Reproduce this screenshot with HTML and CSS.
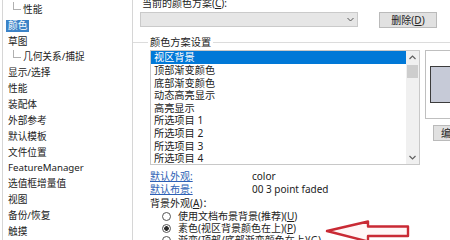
FILE: index.html
```html
<!DOCTYPE html>
<html>
<head>
<meta charset="utf-8">
<link rel="stylesheet" href="styles.css">
</head>
<body>
<div class="page">
  <nav class="tree">
    <div class="row"><span class="branch"></span><span class="txt">性能</span></div>
    <div class="row"><span class="txt sel">颜色</span></div>
    <div class="row"><span class="txt">草图</span></div>
    <div class="row"><span class="branch"></span><span class="txt">几何关系/捕捉</span></div>
    <div class="row"><span class="txt">显示/选择</span></div>
    <div class="row"><span class="txt">性能</span></div>
    <div class="row"><span class="txt">装配体</span></div>
    <div class="row"><span class="txt">外部参考</span></div>
    <div class="row"><span class="txt">默认模板</span></div>
    <div class="row"><span class="txt">文件位置</span></div>
    <div class="row"><span class="txt">FeatureManager</span></div>
    <div class="row"><span class="txt">选值框增量值</span></div>
    <div class="row"><span class="txt">视图</span></div>
    <div class="row"><span class="txt">备份/恢复</span></div>
    <div class="row"><span class="txt">触摸</span></div>
  </nav>
  <main class="pane">
    <div class="scheme">
      <div class="scheme-label">当前的颜色方案(<u>C</u>):</div>
      <div class="scheme-row">
        <div class="combo">
          <svg class="chev" width="7" height="5" viewBox="0 0 7 5"><polyline points="0.5,1 3.5,4 6.5,1" fill="none" stroke="#555" stroke-width="1"/></svg>
        </div>
        <button class="btn del">删除(<u>D</u>)</button>
      </div>
    </div>
    <fieldset class="group">
      <legend>颜色方案设置</legend>
      <div class="settings">
        <div class="listbox">
          <ul class="items">
            <li class="sel">视区背景</li>
            <li>顶部渐变颜色</li>
            <li>底部渐变颜色</li>
            <li>动态高亮显示</li>
            <li>高亮显示</li>
            <li>所选项目 1</li>
            <li>所选项目 2</li>
            <li>所选项目 3</li>
            <li>所选项目 4</li>
          </ul>
          <div class="vscroll">
            <div class="sbtn"><svg width="7" height="5" viewBox="0 0 7 5"><polyline points="0.5,4 3.5,1 6.5,4" fill="none" stroke="#606060" stroke-width="1.2"/></svg></div>
            <div class="thumb"></div>
            <div class="track"></div>
            <div class="sbtn"><svg width="7" height="5" viewBox="0 0 7 5"><polyline points="0.5,1 3.5,4 6.5,1" fill="none" stroke="#606060" stroke-width="1.2"/></svg></div>
          </div>
        </div>
        <div class="preview-col">
          <div class="preview"><div class="swatch"></div></div>
          <button class="btn edit">编辑(E)...</button>
        </div>
      </div>
      <div class="info">
        <a class="link">默认外观:</a><span>color</span>
        <a class="link">默认布景:</a><span>00 3 point faded</span>
      </div>
      <div class="bg-label">背景外观(<u>A</u>)：</div>
      <div class="radios">
        <div class="opt"><span class="radio"></span><span class="opt-text">使用文档布景背景(推荐)(<u>U</u>)</span></div>
        <div class="opt"><span class="radio on"></span><span class="opt-text">素色(视区背景颜色在上)(<u>P</u>)</span></div>
        <div class="opt"><span class="radio"></span><span class="opt-text">渐变(顶部/底部渐变颜色在上)(<u>G</u>)</span></div>
      </div>
    </fieldset>
  </main>
  <svg class="arrow" width="96" height="34" viewBox="0 0 96 34">
    <polygon points="5,15 46,5.5 46,10.5 86,10.5 86,20 46,20 46,25.5" fill="#fff6f6" stroke="#c92a34" stroke-width="2.4" stroke-linejoin="round"/>
  </svg>
</div>
</body>
</html>
```

FILE: styles.css
```css
* { box-sizing: border-box; }
html, body { margin: 0; padding: 0; }
body {
  width: 450px;
  height: 240px;
  overflow: hidden;
  background: #fff;
  font-family: "Noto Sans", "Noto Sans CJK SC", sans-serif;
  font-size: 10px;
  color: #222;
}
.page {
  position: relative;
  display: flex;
  width: 450px;
  height: 240px;
  overflow: hidden;
}
.tree {
  flex: none;
  width: 131px;
  margin-left: 2px;
  border-left: 1px solid #d6d6d6;
  border-right: 1px solid #d6d6d6;
  padding-top: 2px;
  font-size: 9.7px;
}
.row {
  display: flex;
  align-items: center;
  height: 15.85px;
  padding-left: 3px;
  white-space: nowrap;
}
.branch {
  align-self: flex-start;
  flex: none;
  width: 8px;
  height: 8px;
  margin-left: 7px;
  border-left: 1px solid #b0b0b0;
  border-bottom: 1px solid #b0b0b0;
}
.txt {
  padding: 0 2px;
  line-height: 12px;
  height: 12px;
}
.txt.sel {
  background: #3b83c8;
  color: #fff;
}
.pane {
  flex: 1;
  min-width: 0;
}
.scheme { padding-left: 7px; }
.scheme-label {
  margin-top: -3px;
  line-height: 12px;
  padding-left: 2px;
}
.scheme-row {
  display: flex;
  align-items: flex-start;
  margin-top: 3px;
}
.combo {
  width: 218px;
  height: 15px;
  background: #e6e6e6;
  border: 1px solid #cacaca;
  display: flex;
  justify-content: flex-end;
  align-items: center;
  padding-right: 3px;
}
.btn {
  font: inherit;
  font-size: 10px;
  color: #222;
  background: #e1e1e1;
  border: 1px solid #bababa;
  padding: 0;
  height: 16px;
  line-height: 14px;
}
.del {
  margin-left: 21px;
  width: 58px;
}
.group {
  margin: 8px 0 0 0;
  border: 0;
  border-top: 1px solid #dcdcdc;
  padding: 2px 0 0 17px;
  width: 340px;
  min-width: 0;
}
.group legend {
  padding: 0 2px;
  margin-left: -2px;
  line-height: 12px;
  font-size: 10.2px;
}
.settings {
  display: flex;
  align-items: flex-start;
}
.listbox {
  flex: none;
  width: 270px;
  height: 115px;
  border: 1px solid #c8c8c8;
  display: flex;
  overflow: hidden;
}
.items {
  flex: 1;
  list-style: none;
  margin: 0;
  padding: 0;
  overflow: hidden;
  font-size: 10.2px;
}
.items li {
  height: 12.6px;
  line-height: 12.6px;
  padding-left: 3px;
  white-space: nowrap;
}
.items li.sel {
  background: #0078d7;
  color: #fff;
  height: 13px;
}
.vscroll {
  flex: none;
  width: 13px;
  background: #f0f0f0;
  display: flex;
  flex-direction: column;
  align-items: center;
}
.sbtn {
  height: 13px;
  width: 13px;
  display: flex;
  align-items: center;
  justify-content: center;
}
.thumb {
  width: 11px;
  height: 13px;
  margin-top: 1px;
  background: #cdcdcd;
}
.track { flex: 1; }
.preview-col {
  margin-left: 5px;
  display: flex;
  flex-direction: column;
}
.preview {
  width: 75px;
  height: 69px;
  border: 1px solid #bfbfbf;
  background: #fff;
  padding: 15px 0 0 4px;
}
.swatch {
  width: 60px;
  height: 37px;
  background: #c6cad7;
  border: 1px solid #3c3c3c;
}
.edit {
  margin: 6px 0 0 8px;
  width: 60px;
  text-align: left;
  padding-left: 7px;
  white-space: nowrap;
  overflow: hidden;
}
.info {
  display: grid;
  grid-template-columns: 102px auto;
  margin-top: 5px;
  line-height: 13.3px;
}
.link {
  color: #2d5fb5;
  text-decoration: underline;
}
.bg-label {
  line-height: 13.4px;
}
.opt {
  display: flex;
  align-items: center;
  height: 12px;
  line-height: 12px;
  padding-left: 12px;
  white-space: nowrap;
}
.opt-text {
  line-height: 12px;
  height: 12px;
}
.radio {
  flex: none;
  width: 9px;
  height: 9px;
  border: 1px solid #555;
  border-radius: 50%;
  margin-right: 7px;
  background: #fff;
}
.radio.on {
  background: radial-gradient(circle, #2a2a2a 0 2px, #fff 2.6px);
}
.arrow {
  position: absolute;
  left: 322px;
  top: 216px;
}
```
